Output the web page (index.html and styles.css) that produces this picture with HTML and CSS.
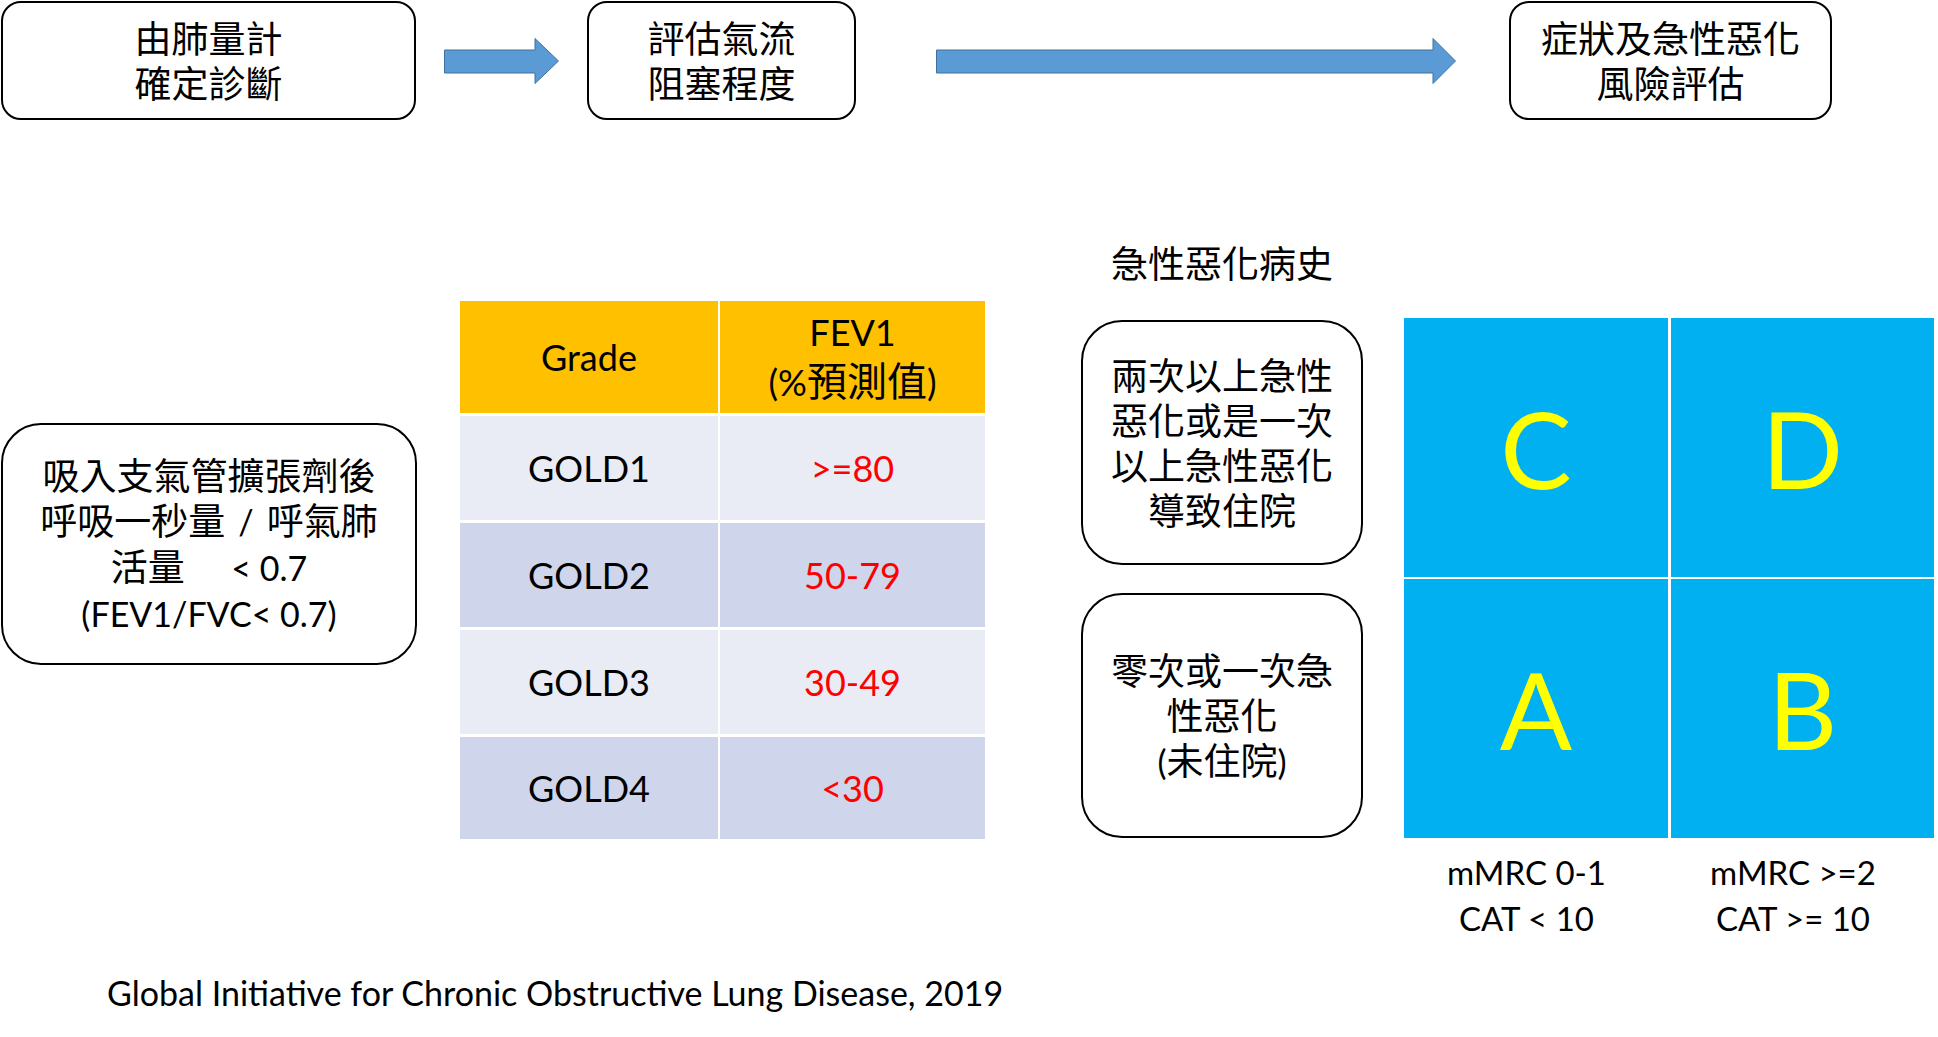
FILE: index.html
```html
<!DOCTYPE html>
<html lang="zh-Hant">
<head>
<meta charset="utf-8">
<title>COPD GOLD 2019</title>
<link rel="stylesheet" href="styles.css">
</head>
<body>
<div class="slide">
  <div class="flow">
    <div class="box top b1"><div>由肺量計<br>確定診斷</div></div>
    <svg class="arrow a1" viewBox="0 0 115 46" aria-hidden="true">
      <polygon points="0.5,12 91,12 91,0.5 114.5,23 91,45.5 91,35 0.5,35" />
    </svg>
    <div class="box top b2"><div>評估氣流<br>阻塞程度</div></div>
    <svg class="arrow a2" viewBox="0 0 520 46" aria-hidden="true">
      <polygon points="0.5,12 497,12 497,0.5 519.5,23 497,45.5 497,35 0.5,35" />
    </svg>
    <div class="box top b3"><div>症狀及急性惡化<br>風險評估</div></div>
  </div>

  <div class="main">
    <div class="col-left">
      <div class="box crit">
        <div>吸入支氣管擴張劑後<br>呼吸一秒量<span class="lt sl">/</span>呼氣肺<br>活量　 <span class="lt">&lt; 0.7</span><br><span class="lt">(FEV1/FVC&lt; 0.7)</span></div>
      </div>
    </div>

    <div class="gold-table">
      <div class="cell head"><div>Grade</div></div>
      <div class="cell head"><div>FEV1<br>(%<span class="cj">預測值</span>)</div></div>
      <div class="cell light"><div>GOLD1</div></div>
      <div class="cell light red"><div>&gt;=80</div></div>
      <div class="cell dark"><div>GOLD2</div></div>
      <div class="cell dark red"><div>50-79</div></div>
      <div class="cell light"><div>GOLD3</div></div>
      <div class="cell light red"><div>30-49</div></div>
      <div class="cell dark"><div>GOLD4</div></div>
      <div class="cell dark red"><div>&lt;30</div></div>
    </div>

    <div class="col-hist">
      <div class="hist-title">急性惡化病史</div>
      <div class="box hist hist-a"><div>兩次以上急性<br>惡化或是一次<br>以上急性惡化<br>導致住院</div></div>
      <div class="box hist hist-b"><div>零次或一次急<br>性惡化<br><span class="lt">(</span>未住院<span class="lt">)</span></div></div>
    </div>

    <div class="col-grid">
      <div class="abcd">
        <div class="quad">C</div>
        <div class="quad">D</div>
        <div class="quad">A</div>
        <div class="quad">B</div>
      </div>
      <div class="axis">
        <div>mMRC 0-1<br>CAT &lt; 10</div>
        <div>mMRC &gt;=2<br>CAT &gt;= 10</div>
      </div>
    </div>
  </div>

  <div class="source">Global Initiative for Chronic Obstructive Lung Disease, 2019</div>
</div>
</body>
</html>
```

FILE: styles.css
```css
html, body {
  margin: 0;
  padding: 0;
  background: #ffffff;
}

body {
  font-family: Lato, "Noto Sans CJK TC", sans-serif;
  color: #000000;
}

.slide {
  width: 1938px;
  height: 1037px;
  overflow: hidden;
  box-sizing: border-box;
  padding-top: 1px;
}

/* ---------- top flow ---------- */
.flow {
  display: flex;
  align-items: center;
  height: 119px;
  padding-left: 1px;
}

.box {
  box-sizing: border-box;
  border: 2px solid #000000;
  background: #ffffff;
  display: flex;
  align-items: center;
  justify-content: center;
  text-align: center;
  font-family: Lato, "Noto Sans CJK TC", sans-serif;
  font-size: 37px;
  line-height: 45px;
  color: #000000;
}

.top {
  height: 119px;
  border-radius: 20px;
}

.b1 { width: 415px; }
.b2 { width: 269px; margin-left: 28px; }
.b3 { width: 323px; margin-left: 53px; }

.arrow {
  display: block;
  height: 46px;
  flex: none;
}

.arrow polygon {
  fill: #5b9bd5;
  stroke: #41719c;
  stroke-width: 1;
}

.a1 { width: 115px; margin-left: 28px; }
.a2 { width: 520px; margin-left: 80px; }

.lt {
  font-family: Lato, sans-serif;
  font-size: 34px;
}

.sl {
  padding: 0 13px;
}

/* ---------- main area ---------- */
.main {
  display: flex;
  align-items: flex-start;
}

.col-left {
  width: 417px;
  padding-left: 1px;
  box-sizing: border-box;
  margin-top: 303px;
}

.crit {
  width: 416px;
  height: 242px;
  border-radius: 40px;
}

/* GOLD table */
.gold-table {
  margin-left: 43px;
  margin-top: 181px;
  display: grid;
  grid-template-columns: 258px 265px;
  grid-template-rows: 112px 104px 104px 104px 102px;
  column-gap: 2px;
  row-gap: 3px;
  background: #ffffff;
}

.cell {
  display: flex;
  align-items: center;
  justify-content: center;
  text-align: center;
  font-family: Lato, "Noto Sans CJK TC", sans-serif;
  font-size: 36px;
  line-height: 47px;
  color: #000000;
}

.cell .cj {
  font-family: "Noto Sans CJK TC", sans-serif;
  font-size: 40px;
}

.head { background: #ffc000; }
.light { background: #e9ebf5; }
.dark { background: #cfd5ea; }
.red { color: #ff0000; }

/* exacerbation history column */
.col-hist {
  width: 282px;
  margin-left: 96px;
  margin-top: 120px;
  display: flex;
  flex-direction: column;
}

.hist-title {
  text-align: center;
  font-family: "Noto Sans CJK TC", sans-serif;
  font-size: 37px;
  line-height: 45px;
  height: 45px;
}

.hist {
  width: 282px;
  height: 245px;
  border-radius: 41px;
}

.hist-a { margin-top: 35px; }
.hist-b { margin-top: 28px; }

/* ABCD grid */
.col-grid {
  width: 530px;
  margin-left: 41px;
  margin-top: 198px;
}

.abcd {
  display: grid;
  grid-template-columns: 264px 263px;
  grid-template-rows: 259px 259px;
  column-gap: 3px;
  row-gap: 2px;
  background: #ffffff;
}

.quad {
  background: #00b0f0;
  color: #ffff00;
  display: flex;
  align-items: center;
  justify-content: center;
  font-family: Lato, sans-serif;
  font-size: 107px;
  line-height: 1;
}

.axis {
  margin-top: 11px;
  display: grid;
  grid-template-columns: 264px 263px;
  column-gap: 3px;
  text-align: center;
  font-family: Lato, sans-serif;
  font-size: 33px;
  line-height: 46px;
}

.axis > div {
  padding-right: 19px;
}

/* source */
.source {
  margin-top: 32px;
  padding-left: 107px;
  font-family: Lato, sans-serif;
  font-size: 34px;
  line-height: 40px;
  white-space: nowrap;
}
```
